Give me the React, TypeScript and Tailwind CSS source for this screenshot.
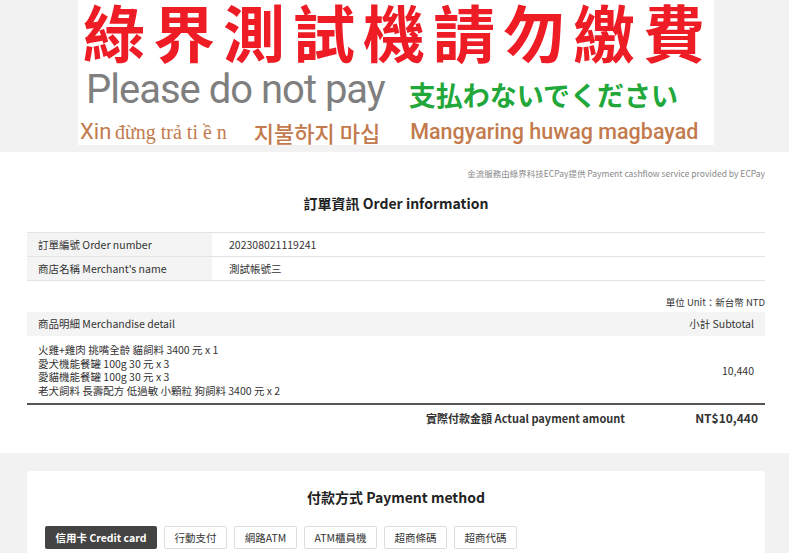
import React from "react";

const cjk = { fontFamily: '"Noto Sans CJK TC", "Noto Sans", sans-serif' };

export default function App() {
  const items = [
    "火雞+雞肉 挑嘴全齡 貓飼料 3400 元 x 1",
    "愛犬機能餐罐 100g 30 元 x 3",
    "愛貓機能餐罐 100g 30 元 x 3",
    "老犬飼料 長壽配方 低過敏 小顆粒 狗飼料 3400 元 x 2",
  ];
  const methods: [string, string][] = [
    ["行動支付", "w-[63px]"],
    ["網路ATM", "w-[63px]"],
    ["ATM櫃員機", "w-[73px]"],
    ["超商條碼", "w-[63px]"],
    ["超商代碼", "w-[63px]"],
  ];
  return (
    <div className="w-[789px] min-h-[553px] bg-[#f2f2f2] text-[#333]" style={cjk}>
      {/* banner */}
      <div className="h-[152px] flex">
        <div className="ml-[78px] w-[636px] h-[145px] bg-white flex flex-col">
          <div className="h-[68px] pl-[5px]">
            <div
              className="text-[#ee1c25] font-bold text-[62px] leading-[62px] tracking-[8px] whitespace-nowrap"
              style={{ fontFamily: '"Noto Sans CJK TC", sans-serif' }}
            >
              綠界測試機請勿繳費
            </div>
          </div>
          <div className="flex items-end h-[44px]">
            <span
              className="ml-[8px] text-[#7f7f7f] text-[40px] leading-[44px] tracking-[-1px] whitespace-nowrap"
              style={{ fontFamily: 'Roboto, "Liberation Sans", sans-serif' }}
            >
              Please do not pay
            </span>
            <span
              className="ml-[24px] mb-[1px] text-[#22a83a] font-bold text-[27px] leading-[32px] whitespace-nowrap"
              style={{ fontFamily: '"Noto Sans CJK JP", sans-serif' }}
            >
              支払わないでください
            </span>
          </div>
          <div className="flex items-end h-[33px] text-[#c37a4c] whitespace-nowrap">
            <span className="ml-[2px] leading-[26px]">
              <span className="text-[22px]" style={{ fontFamily: 'Roboto, "Liberation Sans", sans-serif' }}>
                Xin
              </span>{" "}
              <span className="text-[20px]" style={{ fontFamily: '"Liberation Serif", serif' }}>
                đừng trả ti ề n
              </span>
            </span>
            <span
              className="ml-[27px] text-[22px] leading-[26px] font-medium"
              style={{ fontFamily: '"Noto Sans CJK KR", sans-serif' }}
            >
              지불하지 마십
            </span>
            <span
              className="ml-[30px] text-[21.5px] leading-[26px] font-medium"
              style={{ fontFamily: 'Roboto, sans-serif' }}
            >
              Mangyaring huwag magbayad
            </span>
          </div>
        </div>
      </div>

      {/* order info */}
      <div className="bg-white h-[301px] pr-[24px] pl-[27px] pt-[15px]">
        <div className="text-right text-[8.5px] leading-[12px] text-[#888] whitespace-nowrap">
          金流服務由綠界科技ECPay提供 Payment cashflow service provided by ECPay
        </div>
        <div className="mt-[14px] text-center font-bold text-[14px] leading-[20px] text-[#222]">
          訂單資訊 Order information
        </div>
        <div className="mt-[19px] border-t border-[#e3e3e3] text-[10.5px]">
          <div className="flex h-[24px] border-b border-[#e3e3e3]">
            <div className="w-[185px] bg-[#f4f4f4] pl-[11px] flex items-center">訂單編號 Order number</div>
            <div className="pl-[17px] flex items-center">202308021119241</div>
          </div>
          <div className="flex h-[24px] border-b border-[#e3e3e3]">
            <div className="w-[185px] bg-[#f4f4f4] pl-[11px] flex items-center">商店名稱 Merchant's name</div>
            <div className="pl-[17px] flex items-center">測試帳號三</div>
          </div>
        </div>
        <div className="mt-[14px] text-right text-[9.5px] leading-[14px]">單位 Unit：新台幣 NTD</div>
        <div className="mt-[3px] h-[24px] bg-[#f4f4f4] flex items-center justify-between px-[11px] text-[10.5px]">
          <span>商品明細 Merchandise detail</span>
          <span>小計 Subtotal</span>
        </div>
        <div className="flex items-center justify-between px-[11px] pt-[7px] pb-[5px] text-[10.5px] leading-[13.7px] border-b-2 border-[#555]">
          <div>
            {items.map((t) => (
              <div key={t}>{t}</div>
            ))}
          </div>
          <span>10,440</span>
        </div>
        <div className="flex h-[27px] items-center text-[11px] font-bold text-[#333]">
          <span className="ml-auto">實際付款金額 Actual payment amount</span>
          <span className="w-[140px] text-right pr-[7px] text-[12px]">NT$10,440</span>
        </div>
      </div>

      {/* payment method */}
      <div className="pt-[18px] pl-[27px] pr-[24px]">
        <div className="bg-white rounded-[3px] h-[100px] pt-[16px] px-[18px]">
          <div className="text-center font-bold text-[14px] leading-[20px] text-[#222]">付款方式 Payment method</div>
          <div className="mt-[19px] flex gap-[7px] text-[10.5px]">
            <div className="h-[23px] w-[112px] flex items-center justify-center bg-[#444] text-white font-bold rounded-[2px] whitespace-nowrap">
              信用卡 Credit card
            </div>
            {methods.map(([m, w]) => (
              <div
                key={m}
                className={`h-[23px] ${w} flex items-center justify-center border border-[#ddd] rounded-[2px] bg-white text-[#333] whitespace-nowrap`}
              >
                {m}
              </div>
            ))}
          </div>
        </div>
      </div>
    </div>
  );
}
